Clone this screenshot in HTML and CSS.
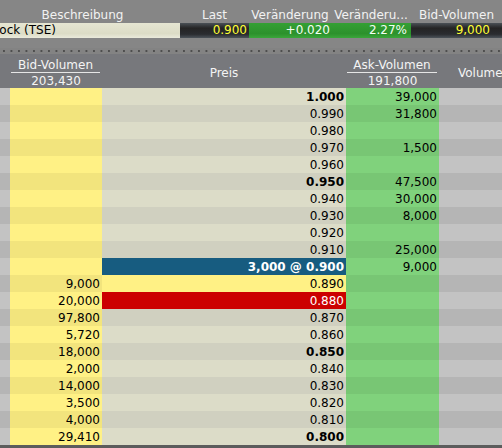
FILE: index.html
```html
<!DOCTYPE html>
<html lang="de">
<head>
  <meta charset="UTF-8" />
  <title>Orderbuch</title>
  <link rel="stylesheet" href="styles.css">
</head>
<body>

  <div class="quote">
    <div class="quote-head">
      <div class="q-desc-h">Beschreibung</div>
      <div>Last</div>
      <div>Veränderung</div>
      <div>Veränderu...</div>
      <div>Bid-Volumen</div>
    </div>
    <div class="quote-row">
      <div class="q-desc"><span>Stock (TSE)</span></div>
      <div class="q-last">0.900</div>
      <div class="q-chg">+0.020</div>
      <div class="q-pct">2.27%</div>
      <div class="q-bid">9,000</div>
    </div>
  </div>

  <div class="dots"></div>

  <div class="book-head">
    <div></div>
    <div class="vol-head">
      <div class="vol-title">Bid-Volumen</div>
      <div class="vol-total">203,430</div>
    </div>
    <div class="plain-head">Preis</div>
    <div class="vol-head">
      <div class="vol-title">Ask-Volumen</div>
      <div class="vol-total">191,800</div>
    </div>
    <div class="plain-head volume-head">Volumen</div>
  </div>

  <div id="book" class="book"></div>

  <script>
    const rows = [
      ['', '1.000', '39,000', 'bold'],
      ['', '0.990', '31,800'],
      ['', '0.980', ''],
      ['', '0.970', '1,500'],
      ['', '0.960', ''],
      ['', '0.950', '47,500', 'bold'],
      ['', '0.940', '30,000'],
      ['', '0.930', '8,000'],
      ['', '0.920', ''],
      ['', '0.910', '25,000'],
      ['', '3,000 @ 0.900', '9,000', 'bold spread'],
      ['9,000', '0.890', '', 'bid-best'],
      ['20,000', '0.880', '', 'last'],
      ['97,800', '0.870', ''],
      ['5,720', '0.860', ''],
      ['18,000', '0.850', '', 'bold'],
      ['2,000', '0.840', ''],
      ['14,000', '0.830', ''],
      ['3,500', '0.820', ''],
      ['4,000', '0.810', ''],
      ['29,410', '0.800', '', 'bold']
    ];

    const book = document.getElementById('book');
    book.innerHTML = rows.map(([bid, price, ask, mod]) => `
      <div class="row">
        <div class="c-gutter"></div>
        <div class="c-bid">${bid}</div>
        <div class="c-price ${mod || ''}">${price}</div>
        <div class="c-ask">${ask}</div>
        <div class="c-vol"></div>
      </div>`).join('');
  </script>
</body>
</html>
```

FILE: styles.css
```css
html, body {
  margin: 0;
  width: 502px;
  height: 448px;
  overflow: hidden;
}
body {
  font-family: "DejaVu Sans", Verdana, sans-serif;
  font-size: 12px;
  background: #858585;
  color: #000;
}

/* quote strip */
.quote {
  height: 48px;
  background: #868686;
}
.quote-head,
.quote-row {
  display: grid;
  grid-template-columns: 180px 69px 82px 80px 91px;
}
.quote-head div {
  padding-top: 8px;
  line-height: 15px;
  color: #f2f2f2;
  text-align: center;
  white-space: nowrap;
  overflow: hidden;
}
.quote-head .q-desc-h { padding-right: 15px; }
.quote-row div {
  height: 15px;
  line-height: 15px;
  text-align: right;
  white-space: nowrap;
  overflow: hidden;
}
.q-desc {
  text-align: left !important;
  background: linear-gradient(#e6e6d2, #dcdcc6 70%, #eaeadb);
}
.q-desc span { margin-left: -13px; }
.q-last {
  padding-right: 2px;
  color: #ffff33;
  background: linear-gradient(#4a5056, #242424 35%, #2a2c30 75%, #4c535a);
}
.q-chg, .q-pct {
  color: #f4fff4;
  background: linear-gradient(#34a034, #2c912c 70%, #3aa63a);
}
.q-chg { padding-right: 1px; }
.q-pct { padding-right: 4px; }
.q-bid {
  padding-right: 12px;
  color: #ffff33;
  background: linear-gradient(#4a5056, #242424 35%, #2a2c30 75%, #4c535a);
}

.dots {
  height: 6px;
  background: #838383 linear-gradient(90deg, #4e4e4e 2px, transparent 2px) 3px 2px / 7.5px 2px repeat-x;
}

/* order book */
.book-head,
.row {
  display: grid;
  grid-template-columns: 10px 92px 244px 93px 63px;
}
.book-head {
  height: 34px;
  background: #77787c;
  color: #f4f4f4;
}
.vol-head {
  padding-top: 4px;
  text-align: center;
}
.vol-title {
  line-height: 14px;
  margin: 0 2px 0 1px;
  border-bottom: 1px solid #e6e6e6;
}
.vol-total {
  margin-top: 1px;
  line-height: 14px;
}
.plain-head {
  padding-top: 12px;
  line-height: 14px;
  text-align: center;
  white-space: nowrap;
  overflow: hidden;
}
.volume-head {
  text-align: left;
  padding-left: 19px;
}

.row {
  height: 17px;
}
.row div {
  box-sizing: border-box;
  padding: 2px 2px 0 0;
  line-height: 15px;
  text-align: right;
  white-space: nowrap;
  overflow: hidden;
}
.c-gutter, .c-vol { background: #c3c3c3; }
.c-bid  { background: #fff185; }
.c-price { background: #dcdcc8; }
.c-ask  { background: #80d27c; }
.row:nth-child(even) .c-gutter,
.row:nth-child(even) .c-vol   { background: #b5b5b5; }
.row:nth-child(even) .c-bid   { background: #f2e47d; }
.row:nth-child(even) .c-price { background: #d0d0c0; }
.row:nth-child(even) .c-ask   { background: #78c674; }

.c-price.bold { font-weight: bold; }
.row .c-price.spread {
  background: #175c80;
  color: #fff;
}
.row .c-price.bid-best { background: #fff185; }
.row .c-price.last {
  background: #cc0000;
  color: #fff;
}

.book {
  border-bottom: 3px solid #5c5c5c;
}
```
